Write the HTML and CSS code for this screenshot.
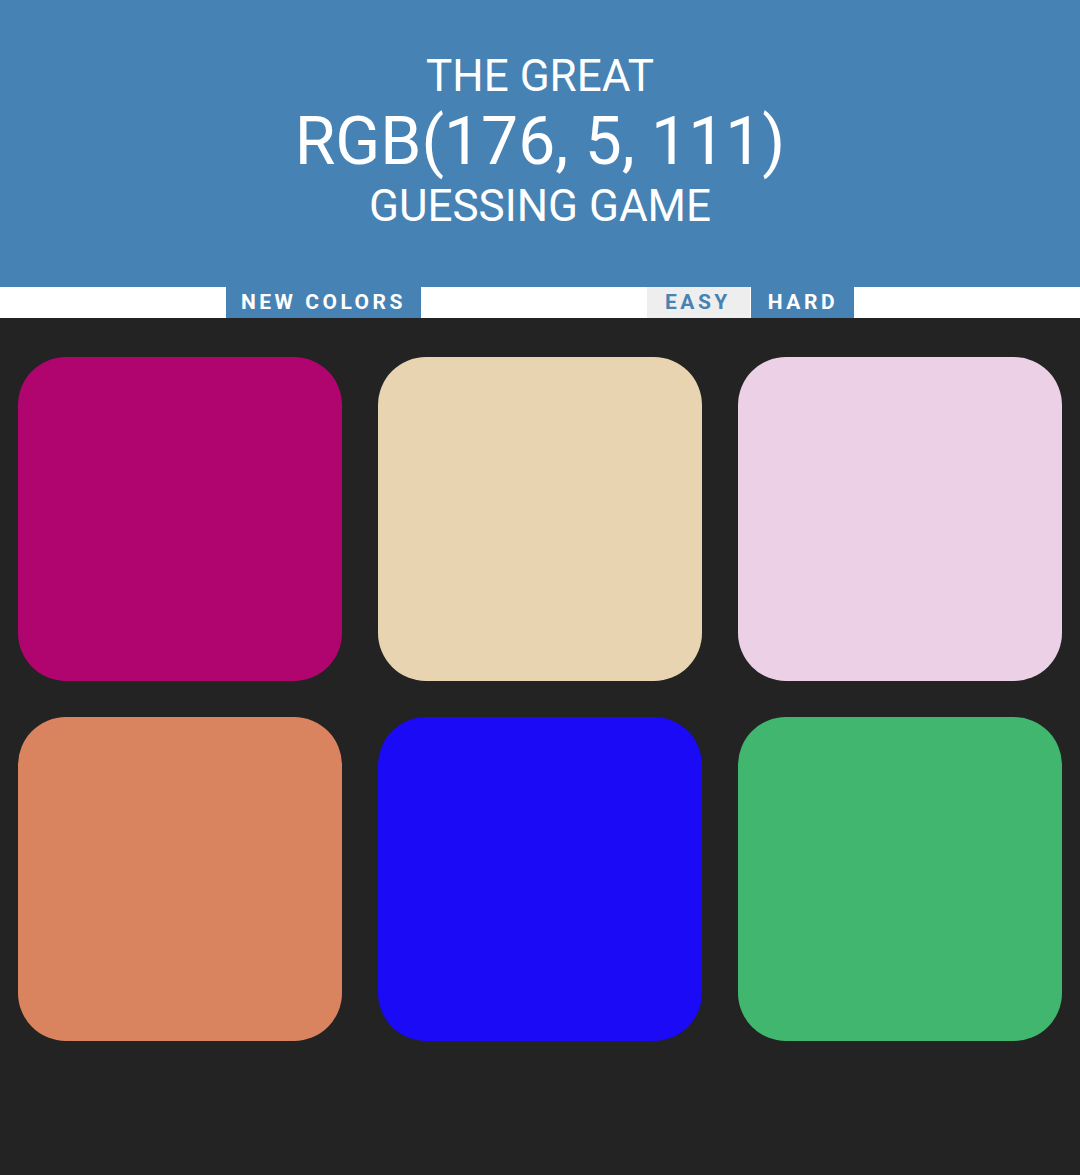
FILE: index.html
```html
<!DOCTYPE html>
<html>
<head>
<meta charset="utf-8">
<link rel="stylesheet" href="styles.css">
</head>
<body>
<header class="title">
  <span class="line small">THE GREAT</span>
  <span class="line big">RGB(176, 5, 111)</span>
  <span class="line small last">GUESSING GAME</span>
</header>
<nav class="stripe">
  <button class="btn btn-blue btn-new">NEW COLORS</button>
  <span class="message"></span>
  <button class="btn btn-easy">EASY</button>
  <button class="btn btn-blue btn-hard">HARD</button>
</nav>
<main class="board">
  <div class="square" style="background: rgb(176, 5, 111)"></div>
  <div class="square" style="background: rgb(232, 212, 176)"></div>
  <div class="square" style="background: rgb(236, 208, 230)"></div>
  <div class="square" style="background: rgb(217, 132, 95)"></div>
  <div class="square" style="background: rgb(26, 10, 245)"></div>
  <div class="square" style="background: rgb(65, 182, 110)"></div>
</main>
</body>
</html>
```

FILE: styles.css
```css
html, body {
  margin: 0;
  padding: 0;
}
body {
  background: #232323;
  font-family: Roboto, "Liberation Sans", sans-serif;
  height: 1175px;
}
.title {
  background: #4682b4;
  color: #ffffff;
  text-align: center;
  padding: 54px 0 58px;
  height: 175px;
}
.line {
  display: block;
  font-weight: 400;
}
.small {
  font-size: 44px;
  line-height: 45px;
}
.big {
  font-size: 66px;
  line-height: 85px;
}
.stripe {
  background: #ffffff;
  height: 31px;
  display: flex;
  justify-content: center;
  align-items: stretch;
}
.btn {
  border: none;
  margin: 0;
  font-family: Roboto, "Liberation Sans", sans-serif;
  font-weight: 700;
  font-size: 21px;
  letter-spacing: 3.5px;
  height: 31px;
  line-height: 31px;
  text-transform: uppercase;
}
.btn-blue {
  background: #4682b4;
  color: #ffffff;
}
.btn-new {
  padding: 0 15px;
}
.btn-easy {
  background: #eeeeee;
  color: #4682b4;
  margin-right: 1px;
  padding: 0 19px 0 18px;
}
.btn-hard {
  padding: 0 16px 0 17px;
}
.message {
  width: 226px;
}
.board {
  display: grid;
  grid-template-columns: repeat(3, 324px);
  grid-auto-rows: 324px;
  gap: 36px;
  padding: 39px 18px 0;
}
.square {
  border-radius: 48px;
}
```
